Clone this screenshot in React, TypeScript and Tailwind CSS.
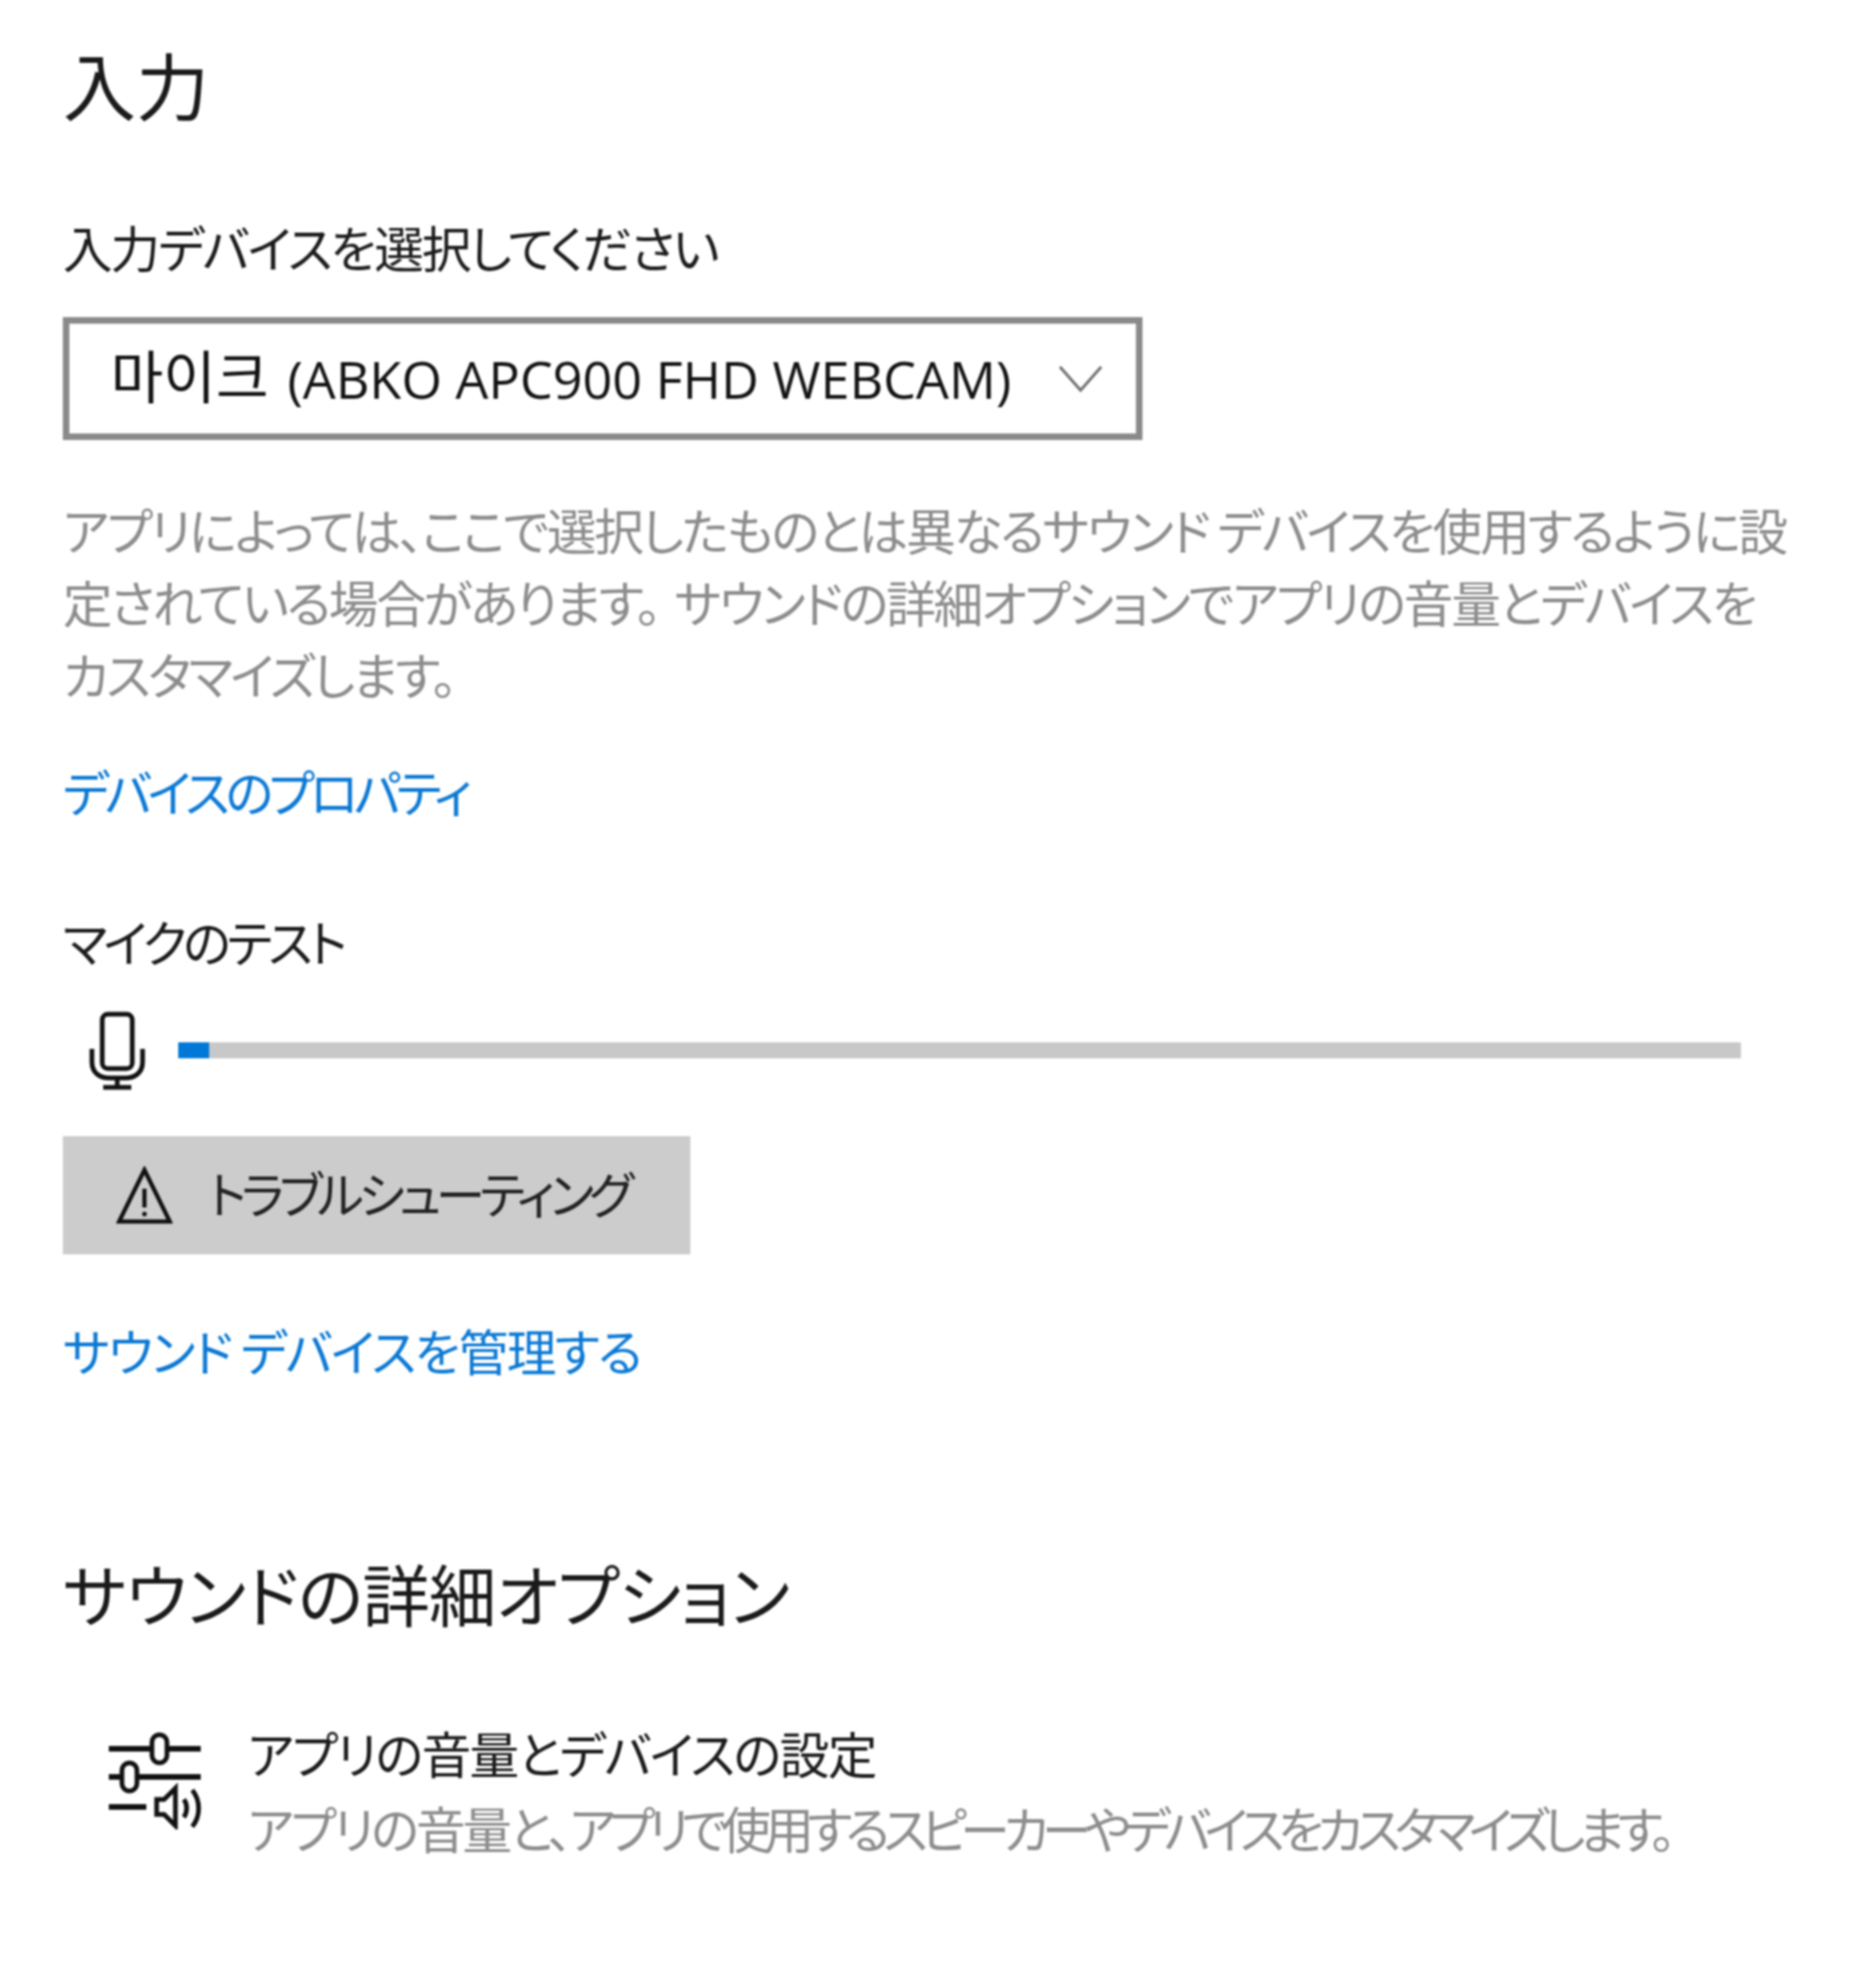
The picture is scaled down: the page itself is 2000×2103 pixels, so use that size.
const jp = "font-['Noto_Sans_CJK_JP','Noto_Sans_CJK_KR',sans-serif] [font-feature-settings:'palt']"

function MicIcon() {
  return (
    <svg width="60" height="84" viewBox="0 0 60 84" fill="none" stroke="#111" strokeWidth="5">
      <rect x="14" y="3" width="32" height="58" rx="6" />
      <path d="M3 40 V54 C3 66 12 71 21 71 H39 C48 71 57 66 57 54 V40" />
      <path d="M30 71 V81 M15 81 H45" />
    </svg>
  )
}

function WarningIcon() {
  return (
    <svg width="60" height="62" viewBox="0 0 60 62" fill="none" stroke="#111" strokeWidth="4.5">
      <path d="M30 4 L57 59 H3 Z" />
      <path d="M30 24 V44" />
      <circle cx="30" cy="51" r="2.5" fill="#111" stroke="none" />
    </svg>
  )
}

function ChevronIcon() {
  return (
    <svg width="48" height="30" viewBox="0 0 48 30" fill="none" stroke="#6e6e6e" strokeWidth="3">
      <path d="M2 2 L24 27 L46 2" />
    </svg>
  )
}

function AppVolumeIcon() {
  return (
    <svg width="100" height="104" viewBox="0 0 100 104" fill="none" stroke="#111" strokeWidth="6">
      <path d="M1 18 H47 M63 18 H99" />
      <rect x="47" y="3" width="16" height="30" rx="8" fill="#fff" strokeWidth="5" />
      <path d="M1 48 H15 M31 48 H99" />
      <rect x="15" y="33" width="16" height="30" rx="8" fill="#fff" strokeWidth="5" />
      <path d="M1 80 H41" />
      <path d="M52 72 H60 L72 60 V100 L60 88 H52 Z" strokeWidth="5" />
      <path d="M81 72 C85 77 85 85 81 91" strokeWidth="5" />
      <path d="M90 62 C99 73 99 90 90 101" strokeWidth="5" />
    </svg>
  )
}

export default function App() {
  return (
    <div className={`w-[2000px] h-[2103px] bg-white pl-[67px] pt-[46px] overflow-hidden blur-[1px] ${jp}`}>
      <h1 className="h-[96px] leading-[86px] text-[78px] font-normal text-[#1a1a1a]">入力</h1>

      <div className="mt-[84px] h-[80px] leading-[74px] text-[53px] tracking-[-2.2px] text-[#1a1a1a]">入力デバイスを選択してください</div>

      <div className="mt-[32px] w-[1151px] h-[131px] border-[7px] border-[#8a8a8a] flex items-center pl-[44px] pr-[35px] justify-between">
        <span className="pb-[4px] text-[61px] leading-[80px] text-[#111] whitespace-nowrap font-['Noto_Sans_CJK_KR','Open_Sans',sans-serif]">
          마이크
          <span className="ml-[20px] text-[55.6px] font-['Open_Sans',sans-serif]">(ABKO APC900 FHD WEBCAM)</span>
        </span>
        <ChevronIcon />
      </div>

      <p className="mt-[57px] text-[53px] leading-[77px] tracking-[-2.4px] text-[#8c8c8c] whitespace-nowrap">
        アプリによっては、ここで選択したものとは異なるサウンド デバイスを使用するように設<br />
        定されている場合があります<span className="mr-[16px]">。</span>サウンドの詳細オプションでアプリの音量とデバイスを<br />
        <span className="tracking-[-3px]">カスタマイズします。</span>
      </p>

      <div className="mt-[49px] h-[80px] leading-[74px] text-[53px] tracking-[-4.8px] text-[#0a78d4]">デバイスのプロパティ</div>

      <div className="mt-[80px] h-[80px] leading-[74px] text-[53px] tracking-[-4.2px] text-[#1a1a1a]">マイクのテスト</div>

      <div className="mt-[32px] h-[83px] flex items-center pl-[28px]">
        <MicIcon />
        <div className="ml-[35px] w-[1666px] h-[17px] bg-[#c8c8c8]">
          <div className="w-[33px] h-full bg-[#0078d7]" />
        </div>
      </div>

      <button className="mt-[50px] w-[669px] h-[126px] bg-[#cccccc] flex items-center pl-[57px] text-[53px] text-[#222]">
        <WarningIcon />
        <span className="ml-[38px] pb-[4px] whitespace-nowrap tracking-[-5.6px]">トラブルシューティング</span>
      </button>

      <div className="mt-[65px] h-[80px] leading-[74px] text-[53px] tracking-[-1.8px] text-[#0a78d4]">サウンド デバイスを管理する</div>

      <h2 className="mt-[170px] h-[96px] leading-[90px] text-[72px] tracking-[-0.8px] font-normal text-[#1a1a1a]">サウンドの詳細オプション</h2>

      <div className="mt-[83px] flex pl-[48px]">
        <div className="pt-[15px]">
          <AppVolumeIcon />
        </div>
        <div className="ml-[49px]">
          <div className="h-[80px] leading-[74px] text-[53px] tracking-[-1.8px] text-[#1a1a1a]">アプリの音量とデバイスの設定</div>
          <div className="h-[80px] leading-[74px] text-[53px] whitespace-nowrap text-[#8c8c8c]">
            <span className="tracking-[-3.3px]">アプリの音量と、</span>
            <span className="tracking-[-7.2px]">アプリで使用するスピーカーやデバイスをカスタマイズします。</span>
          </div>
        </div>
      </div>
    </div>
  )
}
